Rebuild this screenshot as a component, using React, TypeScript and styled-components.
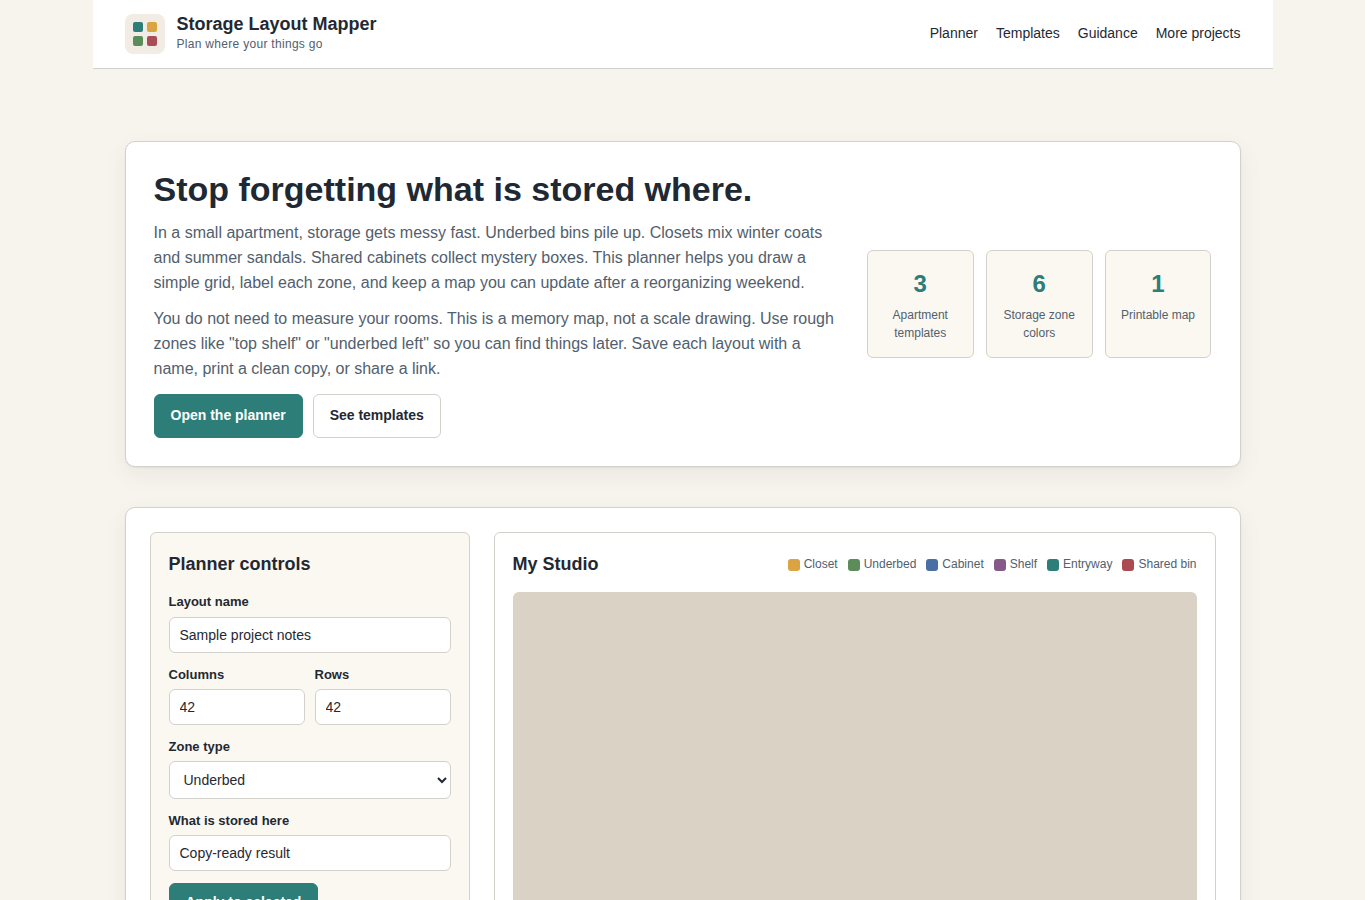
import React from "react";
import styled, { createGlobalStyle } from "styled-components";

const GlobalStyle = createGlobalStyle`
  *, *::before, *::after { box-sizing: border-box; }
  html { height: 100%; overflow: hidden; }
  body {
    margin: 0;
    background: #f7f4ed;
    color: #1f2933;
    font-family: "Liberation Sans", Arial, sans-serif;
    font-size: 16px;
    line-height: 1.55;
  }
  h1, h2, p { margin: 0; }
`;

const Header = styled.header`
  display: flex;
  align-items: center;
  justify-content: space-between;
  max-width: 1180px;
  margin: 0 auto;
  height: 69px;
  padding: 14px 32px;
  background: #ffffff;
  border-bottom: 1px solid #d0d0cd;
`;

const Brand = styled.div`
  display: flex;
  align-items: center;
  gap: 12px;
`;

const Logo = styled.div`
  display: grid;
  grid-template-columns: 10px 10px;
  grid-auto-rows: 10px;
  place-content: center;
  gap: 4px;
  width: 40px;
  height: 40px;
  border-radius: 8px;
  background: #f1ede4;
`;

const LogoTile = styled.span<{ $color: string }>`
  border-radius: 2px;
  background: ${(p) => p.$color};
`;

const BrandText = styled.div`
  display: flex;
  flex-direction: column;
`;

const BrandName = styled.span`
  font-size: 18px;
  font-weight: 700;
  line-height: 21.6px;
`;

const Tagline = styled.span`
  font-size: 12px;
  line-height: 17px;
  letter-spacing: 0.3px;
  margin-bottom: 1.6px;
  color: #52606d;
`;

const Nav = styled.nav`
  display: flex;
  gap: 18px;
`;

const NavLink = styled.a`
  font-size: 14px;
  color: #1f2933;
  text-decoration: none;
`;

const Main = styled.main`
  display: flex;
  flex-direction: column;
  gap: 40px;
  max-width: 1180px;
  margin: 0 auto;
  padding: 72px 32px;
`;

const Panel = styled.section`
  display: grid;
  gap: 24px;
  background: #ffffff;
  border: 1px solid #d3d1cb;
  border-radius: 10px;
  box-shadow: 0 1px 2px rgba(31, 41, 51, 0.06), 0 8px 24px rgba(31, 41, 51, 0.06);
`;

const Hero = styled(Panel)`
  grid-template-columns: 2fr 1fr;
  align-items: center;
  padding: 28px;
`;

const HeroCopy = styled.div`
  display: flex;
  flex-direction: column;
  gap: 12px;
`;

const HeroTitle = styled.h1`
  font-size: 34px;
  line-height: 1.15;
`;

const HeroText = styled.p`
  color: #52606d;
`;

const ButtonRow = styled.div`
  display: flex;
  gap: 10px;
`;

const Button = styled.button<{ $primary?: boolean }>`
  padding: 10px 16px;
  border: 1px solid ${(p) => (p.$primary ? "#2d7d78" : "#d3d1cb")};
  border-radius: 6px;
  background: ${(p) => (p.$primary ? "#2d7d78" : "#ffffff")};
  color: ${(p) => (p.$primary ? "#ffffff" : "#1f2933")};
  font-family: inherit;
  font-size: 14px;
  font-weight: 700;
  text-decoration: none;
`;

const Stats = styled.div`
  display: grid;
  grid-template-columns: repeat(3, 1fr);
  gap: 12px;
`;

const Stat = styled.div`
  display: flex;
  flex-direction: column;
  gap: 4px;
  padding: 14px;
  border: 1px solid #d3d1cb;
  border-radius: 6px;
  background: #fbf8f2;
  text-align: center;
`;

const StatValue = styled.span`
  font-size: 24px;
  font-weight: 700;
  color: #2d7d78;
`;

const StatLabel = styled.span`
  font-size: 12px;
  color: #52606d;
`;

const Planner = styled(Panel)`
  grid-template-columns: 320px 1fr;
  padding: 24px;
`;

const Card = styled.div<{ $tinted?: boolean }>`
  display: flex;
  flex-direction: column;
  padding: 18px;
  border: 1px solid #d3d1cb;
  border-radius: 6px;
  background: ${(p) => (p.$tinted ? "#fbf8f2" : "#ffffff")};
`;

const CardTitle = styled.h2`
  font-size: 18px;
`;

const Form = styled.div`
  display: flex;
  flex-direction: column;
  gap: 12px;
  margin-top: 14px;
`;

const FieldPair = styled.div`
  display: grid;
  grid-template-columns: 1fr 1fr;
  gap: 10px;
`;

const Field = styled.label`
  display: flex;
  flex-direction: column;
  gap: 4px;
  font-size: 13px;
  font-weight: 700;
`;

const Input = styled.input`
  width: 100%;
  height: 36px;
  padding: 8px 10px;
  border: 1px solid #d3d1cb;
  border-radius: 6px;
  background: #ffffff;
  color: #1f2933;
  font: inherit;
  font-size: 14px;
  font-weight: 400;
`;

const Select = styled.select`
  width: 100%;
  height: 38px;
  padding: 8px 10px;
  border: 1px solid #d3d1cb;
  border-radius: 6px;
  background: #ffffff;
  color: #1f2933;
  font: inherit;
  font-size: 14px;
  font-weight: 400;
`;

const FormActions = styled.div`
  display: flex;
`;

const MapHeader = styled.div`
  display: flex;
  align-items: center;
  justify-content: space-between;
  margin-bottom: 14px;
`;

const Legend = styled.div`
  display: flex;
  gap: 10px;
  font-size: 12px;
  color: #52606d;
`;

const Swatch = styled.span<{ $color: string }>`
  display: inline-block;
  width: 12px;
  height: 12px;
  margin-right: 4px;
  border-radius: 3px;
  vertical-align: middle;
  background: ${(p) => p.$color};
`;

const MapSurface = styled.div`
  height: 684px;
  border-radius: 6px;
  background: #d9d2c5;
`;

const navItems = ["Planner", "Templates", "Guidance", "More projects"];
const logoColors = ["#2d7d78", "#d9a441", "#5b8c5a", "#a94e55"];
const stats = [
  ["3", "Apartment templates"],
  ["6", "Storage zone colors"],
  ["1", "Printable map"],
];
const zones = [
  ["Closet", "#d9a441"],
  ["Underbed", "#5b8c5a"],
  ["Cabinet", "#4a6fa5"],
  ["Shelf", "#855a87"],
  ["Entryway", "#2d7d78"],
  ["Shared bin", "#ab4b51"],
];

export default function App() {
  return (
    <>
      <GlobalStyle />
      <Header>
        <Brand>
          <Logo>
            {logoColors.map((c) => (
              <LogoTile key={c} $color={c} />
            ))}
          </Logo>
          <BrandText>
            <BrandName>Storage Layout Mapper</BrandName>
            <Tagline>Plan where your things go</Tagline>
          </BrandText>
        </Brand>
        <Nav>
          {navItems.map((n) => (
            <NavLink key={n} href="#">
              {n}
            </NavLink>
          ))}
        </Nav>
      </Header>
      <Main>
        <Hero>
          <HeroCopy>
            <HeroTitle>Stop forgetting what is stored where.</HeroTitle>
            <HeroText>
              In a small apartment, storage gets messy fast. Underbed bins pile up. Closets mix winter
              coats and summer sandals. Shared cabinets collect mystery boxes. This planner helps you
              draw a simple grid, label each zone, and keep a map you can update after a reorganizing
              weekend.
            </HeroText>
            <HeroText>
              You do not need to measure your rooms. This is a memory map, not a scale drawing. Use
              rough zones like "top shelf" or "underbed left" so you can find things later. Save each
              layout with a name, print a clean copy, or share a link.
            </HeroText>
            <ButtonRow>
              <Button as="a" href="#" $primary>
                Open the planner
              </Button>
              <Button as="a" href="#">
                See templates
              </Button>
            </ButtonRow>
          </HeroCopy>
          <Stats>
            {stats.map(([value, label]) => (
              <Stat key={label}>
                <StatValue>{value}</StatValue>
                <StatLabel>{label}</StatLabel>
              </Stat>
            ))}
          </Stats>
        </Hero>
        <Planner>
          <Card $tinted>
            <CardTitle>Planner controls</CardTitle>
            <Form>
              <Field>
                Layout name
                <Input defaultValue="Sample project notes" />
              </Field>
              <FieldPair>
                <Field>
                  Columns
                  <Input defaultValue="42" />
                </Field>
                <Field>
                  Rows
                  <Input defaultValue="42" />
                </Field>
              </FieldPair>
              <Field>
                Zone type
                <Select defaultValue="Underbed">
                  {zones.map(([name]) => (
                    <option key={name}>{name}</option>
                  ))}
                </Select>
              </Field>
              <Field>
                What is stored here
                <Input defaultValue="Copy-ready result" />
              </Field>
              <FormActions>
                <Button $primary>Apply to selected</Button>
              </FormActions>
            </Form>
          </Card>
          <Card>
            <MapHeader>
              <CardTitle>My Studio</CardTitle>
              <Legend>
                {zones.map(([name, color]) => (
                  <span key={name}>
                    <Swatch $color={color} />
                    {name}
                  </span>
                ))}
              </Legend>
            </MapHeader>
            <MapSurface />
          </Card>
        </Planner>
      </Main>
    </>
  );
}
